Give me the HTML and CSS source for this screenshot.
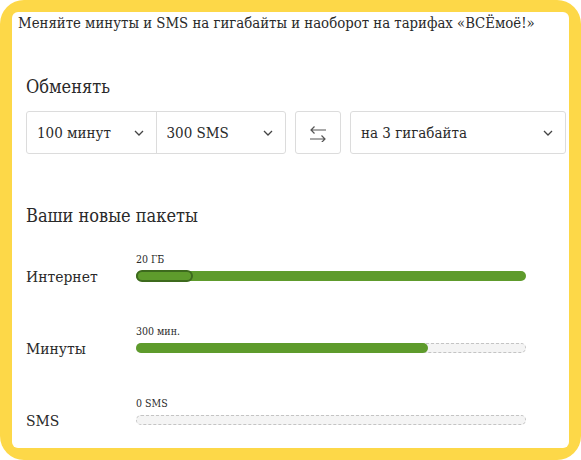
FILE: index.html
```html
<!DOCTYPE html>
<html lang="ru">
<head>
<meta charset="utf-8">
<title>Обмен минут и SMS</title>
<link rel="stylesheet" href="styles.css">
</head>
<body>
<div class="frame">
  <div class="card">
    <p class="lead">Меняйте минуты и SMS на гигабайты и наоборот на тарифах «ВСЁмоё!»</p>
    <div class="content">
      <h2 class="title title-exchange">Обменять</h2>
      <div class="controls">
        <div class="group">
          <div class="select"><span>100 минут</span><svg class="chev" viewBox="0 0 10 6" width="10" height="6"><path d="M1 1 L5 5 L9 1"/></svg></div>
          <div class="select"><span>300 SMS</span><svg class="chev" viewBox="0 0 10 6" width="10" height="6"><path d="M1 1 L5 5 L9 1"/></svg></div>
        </div>
        <button class="swap" type="button" aria-label="Поменять местами">
          <svg viewBox="0 0 20 16" width="20" height="16"><path d="M18 4 H3 M6.5 0.5 L3 4 L6.5 7.5 M2 13 H17 M13.5 9.5 L17 13 L13.5 16.5"/></svg>
        </button>
        <div class="select select-wide"><span>на 3 гигабайта</span><svg class="chev" viewBox="0 0 10 6" width="10" height="6"><path d="M1 1 L5 5 L9 1"/></svg></div>
      </div>

      <h2 class="title title-packs">Ваши новые пакеты</h2>

      <div class="row row-first">
        <div class="row-label">Интернет</div>
        <div class="bar-col">
          <div class="caption">20 ГБ</div>
          <div class="track track-full"><div class="knob"></div></div>
        </div>
      </div>
      <div class="row">
        <div class="row-label">Минуты</div>
        <div class="bar-col">
          <div class="caption">300 мин.</div>
          <div class="track"><div class="fill" style="width:292px"></div></div>
        </div>
      </div>
      <div class="row">
        <div class="row-label">SMS</div>
        <div class="bar-col">
          <div class="caption">0 SMS</div>
          <div class="track"></div>
        </div>
      </div>
    </div>
  </div>
</div>
</body>
</html>
```

FILE: styles.css
```css
html, body {
  margin: 0;
  padding: 0;
}

body {
  background: #ffffff;
  font-family: "DejaVu Serif", "Liberation Serif", serif;
  font-stretch: condensed;
  color: #2a2a2a;
}

.frame {
  width: 581px;
  height: 460px;
  box-sizing: border-box;
  padding: 12px;
  background: #fdd848;
  border-radius: 24px;
}

.card {
  height: 100%;
  box-sizing: border-box;
  background: #ffffff;
  border-radius: 6px;
  padding: 0 3px 0 6px;
  overflow: hidden;
}

.lead {
  margin: 0;
  padding-top: 1px;
  font-size: 14.8px;
  line-height: 20px;
  white-space: nowrap;
}

.content {
  padding-left: 8px;
}

.title {
  margin: 0;
  font-size: 18px;
  font-weight: normal;
  line-height: 24px;
}

.title-exchange {
  margin-top: 42px;
}

.controls {
  display: flex;
  gap: 9px;
  margin-top: 12px;
}

.group {
  display: flex;
  width: 260px;
  height: 43px;
  box-sizing: border-box;
  border: 1px solid #dcdcdc;
  border-radius: 3px;
}

.select {
  flex: 1;
  display: flex;
  align-items: center;
  justify-content: space-between;
  padding: 0 12px 0 10px;
  font-size: 15px;
  color: #2a2a2a;
}

.group .select + .select {
  border-left: 1px solid #dcdcdc;
}

.select-wide {
  flex: none;
  width: 216px;
  height: 43px;
  box-sizing: border-box;
  border: 1px solid #dcdcdc;
  border-radius: 3px;
}

.chev {
  flex: none;
}

.chev path {
  fill: none;
  stroke: #444;
  stroke-width: 1.3;
}

.swap {
  width: 46px;
  height: 43px;
  box-sizing: border-box;
  border: 1px solid #dcdcdc;
  border-radius: 3px;
  background: #ffffff;
  display: flex;
  align-items: center;
  justify-content: center;
  padding: 3px 0 0 0;
}

.swap path {
  fill: none;
  stroke: #555;
  stroke-width: 1.2;
}

.title-packs {
  margin-top: 50px;
}

.row {
  display: flex;
  align-items: flex-end;
  margin-top: 43px;
}

.row-first {
  margin-top: 25px;
}

.row-label {
  width: 110px;
  font-size: 15.5px;
  line-height: 16px;
  margin-bottom: -3px;
}

.bar-col {
  width: 390px;
}

.caption {
  font-size: 10.5px;
  line-height: 13px;
  margin-bottom: 5px;
  color: #2a2a2a;
}

.track {
  position: relative;
  height: 10px;
  margin: 1px 0;
  box-sizing: border-box;
  border: 1px dashed #c4c4c4;
  border-radius: 5px;
  background: #f4f4f4;
}

.track-full {
  border: none;
  background: #5e9b2c;
}

.fill {
  position: absolute;
  left: -1px;
  top: -1px;
  height: 10px;
  border-radius: 5px;
  background: #5e9b2c;
}

.knob {
  position: absolute;
  left: 0;
  top: -1px;
  width: 57px;
  height: 12px;
  box-sizing: border-box;
  border: 2px solid #3d6a1d;
  border-radius: 6px;
  background: #5e9b2c;
}
```
